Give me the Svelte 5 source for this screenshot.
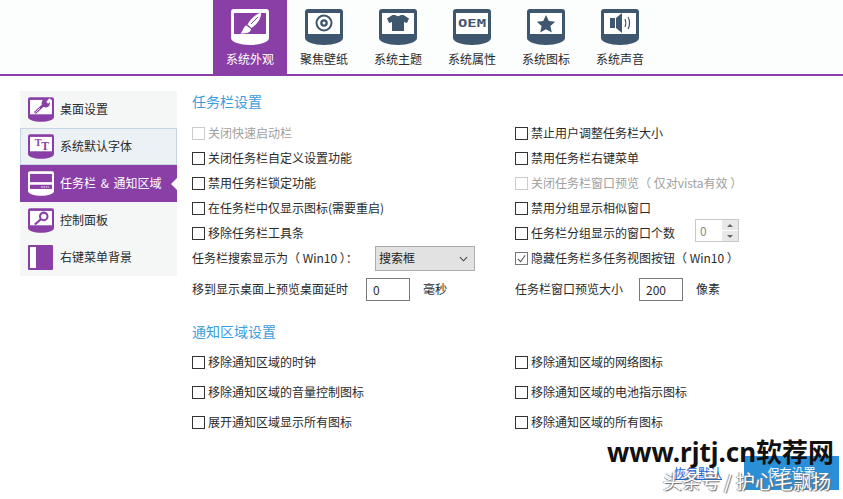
<script>
	const tabs = [
		{ label: '系统外观', icon: 'brush', active: true },
		{ label: '聚焦壁纸', icon: 'target' },
		{ label: '系统主题', icon: 'shirt' },
		{ label: '系统属性', icon: 'oem' },
		{ label: '系统图标', icon: 'star' },
		{ label: '系统声音', icon: 'sound' }
	];

	const menu = [
		{ label: '桌面设置', icon: 'wrench' },
		{ label: '系统默认字体', icon: 'font', hover: true },
		{ label: '任务栏 & 通知区域', icon: 'taskbar', active: true },
		{ label: '控制面板', icon: 'search' },
		{ label: '右键菜单背景', icon: 'panel' }
	];

	const taskbarLeft = [
		{ text: '关闭快速启动栏', disabled: true },
		{ text: '关闭任务栏自定义设置功能' },
		{ text: '禁用任务栏锁定功能' },
		{ text: '在任务栏中仅显示图标(需要重启)' },
		{ text: '移除任务栏工具条' }
	];

	const taskbarRight = [
		{ text: '禁止用户调整任务栏大小' },
		{ text: '禁用任务栏右键菜单' },
		{ text: '关闭任务栏窗口预览（ 仅对vista有效 ）', disabled: true },
		{ text: '禁用分组显示相似窗口' }
	];

	const tray = [
		'移除通知区域的时钟',
		'移除通知区域的网络图标',
		'移除通知区域的音量控制图标',
		'移除通知区域的电池指示图标',
		'展开通知区域显示所有图标',
		'移除通知区域的所有图标'
	];
</script>

{#snippet glyph(name)}
	{#if name === 'brush'}
		<path class="fg" d="M30 4c-5 .5-11 6.500-13.500 11.500l4 3.500C25.500 16 30.500 9.500 30 4z" />
		<path class="cut" d="M27 8l-7 7" />
		<path class="fg" d="M15.500 16.500c-3 .5-2.500 4-6 8 5 .5 10-.5 10.500-4.500z" />
	{:else if name === 'target'}
		<circle class="ink-line" cx="19" cy="14" r="7.500" />
		<circle class="ink" cx="19" cy="14" r="3.800" />
		<circle class="hole" cx="19" cy="14" r="1.500" />
	{:else if name === 'shirt'}
		<path class="ink" d="M13.500 6h3c.5 1.500 4.500 1.500 5 0h3l5.500 3.500-2 4.500-3-1v9H13v-9l-3 1-2-4.500z" />
	{:else if name === 'oem'}
		<text class="oem" x="5" y="18" textLength="28" lengthAdjust="spacingAndGlyphs">OEM</text>
	{:else if name === 'star'}
		<path class="ink" d="M19 6l2.800 6 6.400.7-4.800 4.400 1.400 6.400-5.800-3.300-5.800 3.300 1.400-6.400-4.800-4.400 6.400-.7z" />
	{:else if name === 'sound'}
		<path class="ink" d="M9 9h5v10H9zM15 9l6-5v20l-6-5z" />
		<path class="ink-line thin" d="M24 10c1 2 1 6 0 8M27 8c2 3 2 9 0 12" />
	{:else if name === 'wrench'}
		<path class="fg-line wide" d="M10 23l13-12" />
		<circle class="fg" cx="26" cy="9" r="6" />
		<path class="cut wide" d="M28 8l5-5" />
		<path class="cut thin" d="M10.500 22.500l7-6.500" />
	{:else if name === 'font'}
		<text class="tt" x="15" y="17" font-size="15">T</text>
		<text class="tt" x="25" y="23" font-size="17">T</text>
	{:else if name === 'taskbar'}
		<rect class="fg" x="3" y="16" width="32" height="4" />
		<rect class="screen" x="3" y="20" width="32" height="6" />
		<path class="dots" d="M19 23h12" />
	{:else if name === 'search'}
		<circle class="fg-line" cx="23" cy="12" r="5.500" />
		<path class="fg-line" d="M19 16l-9 8" />
	{/if}
{/snippet}

{#snippet monitor(name)}
	<svg class="monitor" viewBox="0 0 38 36" aria-hidden="true">
		<path class="frame" d="M3 0h32a3 3 0 0 1 3 3v26c0 4-9 7-19 7S0 33 0 29V3a3 3 0 0 1 3-3z" />
		<rect class="screen" x="3" y="4" width="32" height="21" />
		{@render glyph(name)}
	</svg>
{/snippet}

<div class="page">
	<nav class="tabs">
		{#each tabs as tab}
			<div class="tab" class:active={tab.active}>
				{@render monitor(tab.icon)}
				<span>{tab.label}</span>
			</div>
		{/each}
	</nav>

	<div class="body">
		<aside class="menu">
			{#each menu as item}
				<div class="menu-item" class:active={item.active} class:hover={item.hover}>
					{#if item.icon === 'panel'}
						<svg class="monitor small" viewBox="0 0 26 25" aria-hidden="true">
							<rect class="frame" width="25" height="25" rx="1" />
							<rect class="screen" x="2" y="2" width="6" height="21" />
						</svg>
					{:else}
						{@render monitor(item.icon)}
					{/if}
					<span>{item.label}</span>
				</div>
			{/each}
		</aside>

		<main class="content">
			<h2>任务栏设置</h2>
			<div class="grid taskbar">
				<div class="col">
					{#each taskbarLeft as opt}
						<label class="check" class:disabled={opt.disabled}><i></i>{opt.text}</label>
					{/each}
					<div class="field search-field">
						<span>任务栏搜索显示为（ Win10 ）：</span>
						<div class="select">
							搜索框
							<svg viewBox="0 0 10 6" aria-hidden="true"><path d="M1 1l4 4 4-4" /></svg>
						</div>
					</div>
					<div class="field delay-field">
						<span>移到显示桌面上预览桌面延时</span>
						<div class="input">0</div>
						<span class="unit">毫秒</span>
					</div>
				</div>
				<div class="col">
					{#each taskbarRight as opt}
						<label class="check" class:disabled={opt.disabled}><i></i>{opt.text}</label>
					{/each}
					<div class="field">
						<label class="check"><i></i>任务栏分组显示的窗口个数</label>
						<div class="spin">
							<span class="spin-value">0</span>
							<div class="spin-btns">
								<b><em class="up"></em></b>
								<b><em class="down"></em></b>
							</div>
						</div>
					</div>
					<label class="check checked"><i><svg viewBox="0 0 12 12" aria-hidden="true"><path d="M2 6.500l3 3 5-7" /></svg></i>隐藏任务栏多任务视图按钮（ Win10 ）</label>
					<div class="field size-field">
						<span>任务栏窗口预览大小</span>
						<div class="input">200</div>
						<span class="unit">像素</span>
					</div>
				</div>
			</div>

			<h2 class="second">通知区域设置</h2>
			<div class="grid tray">
				{#each tray as text}
					<label class="check"><i></i>{text}</label>
				{/each}
			</div>
		</main>
	</div>

	<footer class="actions">
		<span class="reset">恢复默认</span>
		<span class="save">保存设置</span>
	</footer>

	<div class="mark-site">www.rjtj.cn软荐网</div>
	<div class="mark-author">头条号 / 护心毛飘扬</div>
</div>

<style>
	:global(body) {
		margin: 0;
		background: #fff;
	}

	.page {
		position: relative;
		width: 843px;
		height: 499px;
		overflow: hidden;
		background: #fff;
		color: #2a2a2a;
		font: 12px/1.2 "Noto Sans CJK SC", "Noto Sans", sans-serif;
	}

	.tabs {
		display: flex;
		height: 74px;
		padding-left: 213px;
		background: #fcfdfd;
		border-bottom: 2px solid #8a3fa6;
	}

	.tab {
		display: flex;
		flex-direction: column;
		align-items: center;
		width: 74px;
		padding-top: 9px;
		box-sizing: border-box;
		--frame: #3f566f;
		--screen: #fff;
		--ink: #3f566f;
	}

	.tab span {
		margin-top: 6px;
		line-height: 16px;
	}

	.tab.active {
		background: #8a3fa6;
		color: #fff;
		--frame: #fff;
		--screen: #8a3fa6;
		--fg: #fff;
	}

	.monitor {
		display: block;
		flex: none;
		width: 38px;
		height: 36px;
	}

	.frame {
		fill: var(--frame);
	}

	.screen {
		fill: var(--screen);
	}

	.fg {
		fill: var(--fg);
	}

	.fg-line {
		fill: none;
		stroke: var(--fg);
		stroke-width: 3;
	}

	.fg-line.wide {
		stroke-width: 4;
	}

	.cut {
		fill: none;
		stroke: var(--screen);
		stroke-width: 1;
	}

	.cut.wide {
		stroke-width: 4;
	}

	.cut.thin {
		stroke: #fff;
		stroke-width: 1.200;
	}

	.ink {
		fill: var(--ink);
	}

	.ink-line {
		fill: none;
		stroke: var(--ink);
		stroke-width: 2;
	}

	.ink-line.thin {
		stroke-width: 1.200;
	}

	.hole {
		fill: #fff;
	}

	.dots {
		stroke: #fff;
		stroke-width: 1.500;
		stroke-dasharray: 2.500 1;
	}

	.oem {
		fill: var(--ink);
		font: 700 11px "DejaVu Sans Mono", monospace;
	}

	.tt {
		fill: var(--fg);
		font-family: "Liberation Serif", serif;
		font-weight: 700;
		text-anchor: middle;
	}

	.body {
		display: flex;
		padding: 15px 0 0 20px;
	}

	.menu {
		flex: none;
		width: 157px;
		height: 185px;
		background: #f5f7f7;
	}

	.menu-item {
		display: flex;
		align-items: center;
		gap: 6px;
		height: 37px;
		padding-left: 8px;
		box-sizing: border-box;
		word-spacing: 2px;
		color: #2a2a2a;
		--frame: #8a3fa6;
		--screen: #fff;
		--fg: #8a3fa6;
	}

	.menu-item .monitor {
		width: 26px;
		height: 25px;
	}

	.menu-item.hover {
		background: #ecf1f6;
		border: 1px solid #c5d5e3;
		padding-left: 7px;
	}

	.menu-item.active {
		position: relative;
		background: #8a3fa6;
		color: #fff;
		--frame: #fff;
		--screen: #8a3fa6;
		--fg: #fff;
	}

	.menu-item.active::after {
		content: '';
		position: absolute;
		right: 0;
		top: 13px;
		border: 6px solid transparent;
		border-left-width: 0;
		border-right-color: #fff;
	}

	.content {
		flex: 1;
		padding: 0 0 0 15px;
	}

	h2 {
		margin: 0;
		color: #3a9ede;
		font-size: 14px;
		font-weight: 400;
		line-height: 20px;
	}

	h2.second {
		margin-top: 20px;
	}

	.grid {
		display: grid;
		grid-template-columns: 323px 1fr;
	}

	.taskbar {
		margin-top: 10px;
	}

	.col {
		display: flex;
		flex-direction: column;
	}

	.check {
		display: flex;
		align-items: center;
		gap: 3px;
		height: 25px;
		white-space: pre;
	}

	.check i {
		display: block;
		flex: none;
		width: 11px;
		height: 11px;
		background: #fff;
		border: 1px solid #333;
	}

	.check i svg {
		display: block;
		width: 11px;
		height: 11px;
		fill: none;
		stroke: #555;
		stroke-width: 1.200;
	}

	.check.disabled {
		color: #a0a0a0;
	}

	.check.disabled i {
		border-color: #ccc;
	}

	.check.checked i {
		border-color: #777;
	}

	.field {
		display: flex;
		align-items: center;
		height: 25px;
		white-space: nowrap;
	}

	.search-field {
		gap: 12px;
	}

	.search-field span {
		width: 171px;
		flex: none;
	}

	.select {
		display: flex;
		align-items: center;
		justify-content: space-between;
		width: 100px;
		height: 25px;
		box-sizing: border-box;
		padding: 0 6px 0 3px;
		background: #e2e2e2;
		border: 1px solid #adadad;
		color: #222;
	}

	.select svg {
		width: 9px;
		height: 6px;
		fill: none;
		stroke: #444;
		stroke-width: 1.200;
	}

	.delay-field {
		height: 23px;
		margin-top: 7px;
	}

	.input {
		width: 44px;
		height: 23px;
		box-sizing: border-box;
		padding-left: 6px;
		border: 1px solid #7a7a7a;
		background: #fff;
		line-height: 21px;
	}

	.delay-field .input {
		margin-left: 18px;
	}

	.unit {
		margin-left: 13px;
	}

	.size-field {
		height: 23px;
		margin-top: 7px;
	}

	.size-field .input {
		margin-left: 16px;
	}

	.spin {
		display: flex;
		width: 44px;
		height: 23px;
		margin: 0 0 6px 20px;
		box-sizing: border-box;
		border: 1px solid #c8c8c8;
		color: #888;
	}

	.spin-value {
		flex: 1;
		padding-left: 4px;
		line-height: 21px;
	}

	.spin-btns {
		display: flex;
		flex-direction: column;
		gap: 1px;
		width: 16px;
		background: #fff;
	}

	.spin-btns b {
		flex: 1;
		display: flex;
		align-items: center;
		justify-content: center;
		background: #e8e8e8;
	}

	.spin-btns em {
		border: 3px solid transparent;
		border-top-width: 0;
		border-bottom-color: #666;
	}

	.spin-btns em.down {
		border: 3px solid transparent;
		border-bottom-width: 0;
		border-top-color: #666;
	}

	.tray {
		margin-top: 6px;
		grid-auto-rows: 30px;
	}

	.tray .check {
		height: 30px;
	}

	.actions {
		position: absolute;
		right: 4px;
		top: 456px;
		display: flex;
		align-items: center;
		gap: 22px;
	}

	.reset {
		color: #1464d2;
		text-decoration: underline;
	}

	.save {
		width: 95px;
		height: 34px;
		background: #2b8fd8;
		color: #fff;
		text-align: center;
		line-height: 34px;
	}

	.mark-site {
		position: absolute;
		left: 607px;
		top: 434px;
		color: #111;
		font: 700 26px/36px "Noto Sans", "Noto Sans CJK SC", sans-serif;
		white-space: nowrap;
	}

	.mark-author {
		position: absolute;
		left: 663px;
		top: 468px;
		color: #fff;
		font-size: 19px;
		line-height: 26px;
		white-space: nowrap;
		text-shadow: 1px 1px 1px #666, -1px 0 1px #888;
	}
</style>
